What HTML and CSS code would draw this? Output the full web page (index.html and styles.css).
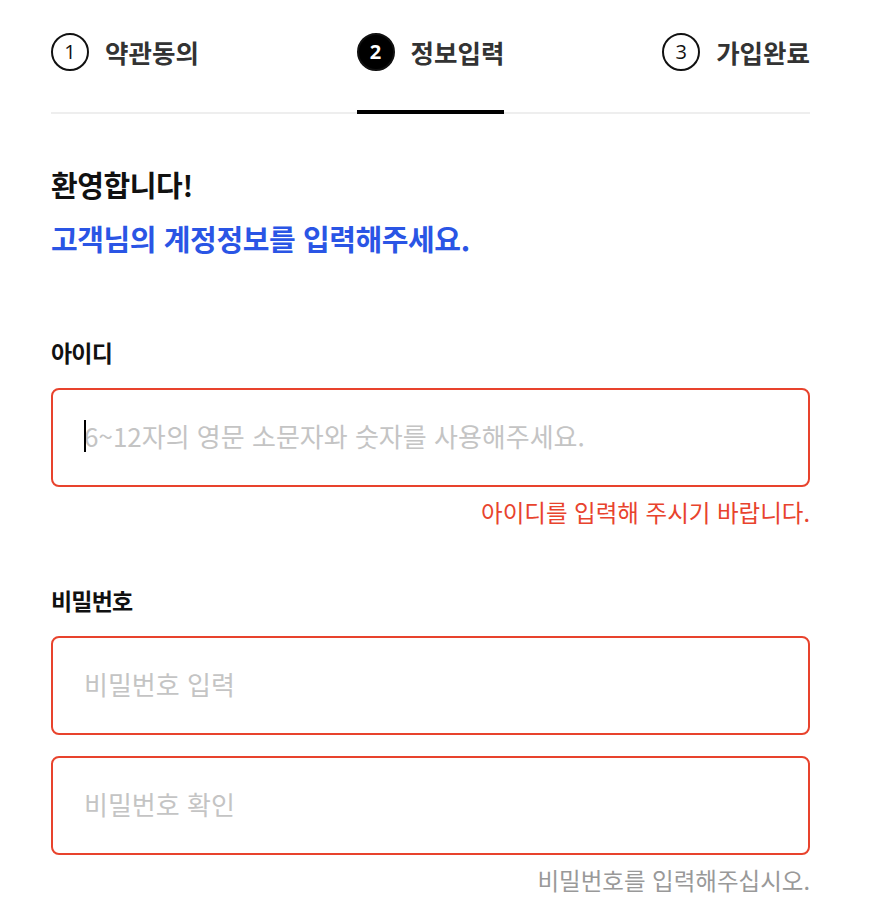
FILE: index.html
```html
<!DOCTYPE html>
<html lang="ko">
<head>
<meta charset="utf-8">
<title>회원가입 - 정보입력</title>
<link rel="stylesheet" href="styles.css">
</head>
<body>
<div class="page">
  <ol class="steps">
    <li class="step"><span class="num">1</span><span class="label">약관동의</span></li>
    <li class="step active"><span class="num">2</span><span class="label">정보입력</span></li>
    <li class="step"><span class="num">3</span><span class="label">가입완료</span></li>
  </ol>

  <div class="welcome">
    <p class="hello">환영합니다!</p>
    <p class="sub">고객님의 계정정보를 입력해주세요.</p>
  </div>

  <form class="form">
    <div class="field">
      <label class="field-label" for="uid">아이디</label>
      <div class="input-wrap">
        <input class="box" id="uid" type="text" placeholder="6~12자의 영문 소문자와 숫자를 사용해주세요.">
        <span class="caret"></span>
      </div>
      <p class="msg error">아이디를 입력해 주시기 바랍니다.</p>
    </div>
    <div class="field pw">
      <label class="field-label" for="pw1">비밀번호</label>
      <input class="box" id="pw1" type="password" placeholder="비밀번호 입력">
      <input class="box" id="pw2" type="password" placeholder="비밀번호 확인">
      <p class="msg hint">비밀번호를 입력해주십시오.</p>
    </div>
  </form>
</div>
</body>
</html>
```
FILE: styles.css
```css
* { box-sizing: border-box; }
html, body { margin: 0; padding: 0; background: #fff; }
body {
  font-family: "Noto Sans CJK KR", "Noto Sans", sans-serif;
  color: #111;
}
.page {
  width: 759px;
  margin-left: 51px;
  padding-top: 33px;
}
.steps {
  list-style: none;
  margin: 0;
  padding: 0;
  display: flex;
  justify-content: space-between;
  border-bottom: 2px solid #eeeeee;
}
.step {
  display: flex;
  align-items: center;
  gap: 16px;
  padding-bottom: 41px;
}
.step.active {
  border-bottom: 4px solid #000;
  margin-bottom: -2px;
  padding-bottom: 39px;
}
.num {
  width: 38px;
  height: 38px;
  border: 2px solid #111;
  border-radius: 50%;
  display: flex;
  align-items: center;
  justify-content: center;
  font-family: "Open Sans", "Noto Sans", sans-serif;
  font-size: 20px;
  line-height: 1;
  color: #111;
}
.step.active .num {
  background: #000;
  color: #fff;
  font-weight: 700;
}
.label {
  font-size: 25.5px;
  font-weight: 700;
  letter-spacing: 0;
  color: #333;
  line-height: 1;
}
.welcome {
  margin-top: 43px;
}
.welcome p {
  margin: 0;
  font-size: 29px;
  font-weight: 700;
  line-height: 54px;
  letter-spacing: -0.4px;
}
.hello { color: #111; }
.sub { color: #2a55e5; }
.form { margin-top: 72px; }
.field { display: flex; flex-direction: column; }
.field.pw { margin-top: 58px; }
.field-label {
  font-size: 23px;
  font-weight: 700;
  line-height: 30px;
  letter-spacing: -0.8px;
  color: #111;
  margin-bottom: 21px;
}
.input-wrap { position: relative; }
.caret {
  position: absolute;
  left: 33px;
  top: 32px;
  width: 2px;
  height: 32px;
  background: #000;
}
.box {
  display: block;
  width: 100%;
  height: 99px;
  border: 2px solid #e8432d;
  border-radius: 8px;
  padding: 0 31px 4px;
  font-family: "Noto Sans CJK KR", "Noto Sans", sans-serif;
  font-size: 26px;
  letter-spacing: 0;
  color: #111;
  outline: none;
  background: #fff;
}
.box::placeholder { color: #c4c4c4; }
.box + .box { margin-top: 21px; }
.msg {
  margin: 10px 0 0;
  text-align: right;
  font-size: 23.5px;
  line-height: 30px;
  letter-spacing: 0;
}
.error { color: #e8432d; }
.hint { color: #999; }
```
